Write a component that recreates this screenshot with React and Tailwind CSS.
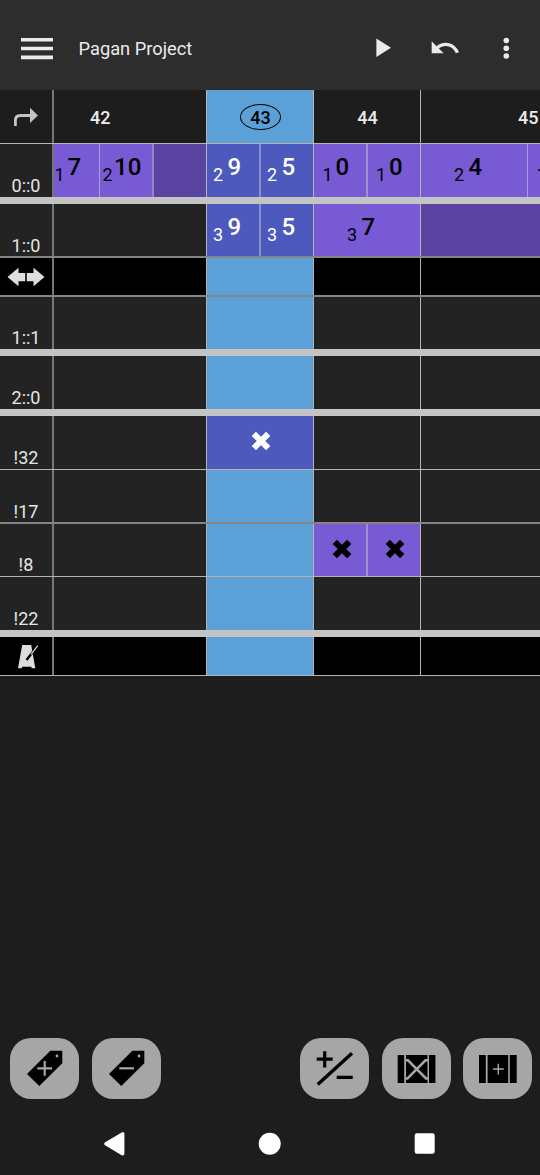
import React from "react";

const W_FIRST = "w-[153px] border-r border-[#b4b4b4]";
const W_BAR = "w-[107px] border-r border-[#b4b4b4]";
const W_LAST = "w-[119px]";

function Note({ octave, value, className = "", gap = "ml-[4.5px]" }) {
  return (
    <div className={`flex h-full shrink-0 overflow-hidden whitespace-nowrap ${className}`}>
      <span className="mt-[20px] ml-[0.5px] w-[10px] shrink-0 text-[18px] leading-[21px]">{octave}</span>
      <span className={`mt-[9px] text-[24px] leading-[28px] font-medium ${gap}`}>{value}</span>
    </div>
  );
}

function Hit({ className = "" }) {
  return (
    <div className={`flex h-full shrink-0 pt-[15px] ${className}`}>
      <svg width="20" height="20" viewBox="0 0 20 20" stroke="currentColor" strokeWidth="6" className="shrink-0">
        <path d="M2.8 2.8 17.2 17.2M17.2 2.8 2.8 17.2" />
      </svg>
    </div>
  );
}

function Row({ label, height, line = "", dark = false, cells = [] }) {
  const bg = dark ? "bg-black" : "bg-[#232323]";
  return (
    <div className={`flex shrink-0 overflow-hidden ${height} ${line} ${bg}`}>
      <div className="flex w-[54px] shrink-0 flex-col items-center justify-end border-r-2 border-[#777777] text-[18px] leading-[21px] text-[#e6e6e6]">
        {label}
      </div>
      <div className={`flex shrink-0 ${W_FIRST}`}>{cells[0]}</div>
      <div className={`flex shrink-0 bg-[#5ba1d7] ${W_BAR}`}>{cells[1]}</div>
      <div className={`flex shrink-0 ${W_BAR}`}>{cells[2]}</div>
      <div className={`flex shrink-0 overflow-hidden ${W_LAST}`}>{cells[3]}</div>
    </div>
  );
}

function Separator() {
  return <div className="h-[7px] shrink-0 bg-[#c4c4c4]" />;
}

function Action({ children, className = "" }) {
  return (
    <button className={`h-[61px] w-[69px] shrink-0 rounded-[21px] bg-[#a6a6a6] ${className}`}>
      <svg width="69" height="61" viewBox="0 0 69 61" fill="none">{children}</svg>
    </button>
  );
}

function Tag() {
  return (
    <>
      <path d="M17 36 40.3 12.7H52.3V25.3L29.3 48Z" fill="#000" />
      <circle cx="47" cy="18" r="1.4" fill="#a6a6a6" />
    </>
  );
}

const SOFT = "border-b-2 border-[#858585]";
const THIN = "border-b border-[#b4b4b4]";
const LABEL = "mb-[1px]";
const PURPLE = "bg-[#775ad4] text-black";
const INDIGO = "bg-[#4d59bc] text-white";

export default function App() {
  return (
    <div className="flex h-[1175px] w-[540px] flex-col overflow-hidden bg-[#1d1d1d] font-[Roboto,sans-serif]">
      <header className="flex h-[90px] shrink-0 items-start bg-[#2d2d2d] pl-[21px] text-[#ebebeb]">
        <svg width="32" height="22" viewBox="0 0 32 22" fill="currentColor" className="mt-[38px] shrink-0">
          <path d="M0 0h32v3.6H0zM0 8.7h32v3.6H0zM0 17.6h32v3.6H0z" />
        </svg>
        <h1 className="mt-[37px] ml-[25.5px] w-[279.5px] text-[18.3px] leading-[24px] whitespace-nowrap">Pagan Project</h1>
        <svg width="16" height="20" viewBox="0 0 16 20" fill="currentColor" className="mt-[38px] ml-[18px] shrink-0">
          <path d="M.4.6 15 9.8.4 19z" />
        </svg>
        <svg width="32" height="32" viewBox="0 0 24 24" fill="currentColor" className="mt-[32px] ml-[37px] shrink-0">
          <path d="M12.5 8c-2.65 0-5.05.99-6.9 2.6L2 7v9h9l-3.62-3.62c1.39-1.16 3.16-1.88 5.12-1.88 3.54 0 6.55 2.31 7.6 5.5l2.37-.78C21.08 11.03 17.15 8 12.5 8z" />
        </svg>
        <svg width="8" height="24" viewBox="0 0 8 24" fill="currentColor" className="mt-[36px] ml-[41px] shrink-0">
          <circle cx="4.3" cy="4.5" r="2.8" />
          <circle cx="4.3" cy="12.3" r="2.8" />
          <circle cx="4.3" cy="20" r="2.8" />
        </svg>
      </header>

      <div className={`flex h-[54px] shrink-0 text-[18px] leading-[21px] font-medium text-[#ebebeb] ${THIN}`}>
        <div className="w-[54px] shrink-0 border-r-2 border-[#777777] pt-[17px] pl-[13px]">
          <svg width="26" height="20" viewBox="0 0 26 20" fill="none">
            <path d="M2.4 19V13.5Q2.4 8.5 7.5 8.5H18" stroke="#c4c4c4" strokeWidth="2.8" />
            <path d="M17 .8 25 8.5 17 16z" fill="#c4c4c4" />
          </svg>
        </div>
        <div className={`shrink-0 pt-[17px] pl-[36px] ${W_FIRST}`}>42</div>
        <div className={`shrink-0 bg-[#5ba1d7] pt-[14px] pl-[33px] text-black ${W_BAR}`}>
          <div className="flex h-[26px] w-[41px] items-center justify-center rounded-[50%] border-[1.5px] border-black pt-[1px]">43</div>
        </div>
        <div className={`shrink-0 pt-[17px] pl-[1px] text-center ${W_BAR}`}>44</div>
        <div className={`shrink-0 overflow-hidden pt-[17px] pl-[97px] ${W_LAST}`}>45</div>
      </div>

      <Row
        height="h-[53px]"
        label={<span className={LABEL}>0::0</span>}
        cells={[
          <React.Fragment key="a">
            <Note octave="1" value="7" gap="ml-[3px]" className={`w-[46px] border-r border-[#a99cd6] ${PURPLE}`} />
            <Note octave="2" value="10" gap="ml-[1.5px]" className={`w-[52px] pl-[2px] ${PURPLE}`} />
            <div className="h-full flex-1 border-l-2 border-[#9285c4] bg-[#5944a2]" />
          </React.Fragment>,
          <React.Fragment key="b">
            <Note octave="2" value="9" className={`w-[54px] border-r-2 border-[#8a90c6] pl-[5.5px] ${INDIGO}`} />
            <Note octave="2" value="5" className={`w-[52px] pl-[5.5px] ${INDIGO}`} />
          </React.Fragment>,
          <React.Fragment key="c">
            <Note octave="1" value="0" gap="ml-[3px]" className={`w-[54px] border-r-2 border-[#9f8fcf] pl-[8px] ${PURPLE}`} />
            <Note octave="1" value="0" gap="ml-[3px]" className={`w-[52px] pl-[7.5px] ${PURPLE}`} />
          </React.Fragment>,
          <React.Fragment key="d">
            <Note octave="2" value="4" gap="ml-[4.5px]" className={`w-[107px] border-r border-[#a99cd6] pl-[32.5px] ${PURPLE}`} />
            <Note octave="1" value="" className={`w-[54px] pl-[8px] ${PURPLE}`} />
          </React.Fragment>,
        ]}
      />
      <Separator />
      <Row
        height="h-[54px]"
        line={SOFT}
        label={<span>1::0</span>}
        cells={[
          null,
          <React.Fragment key="b">
            <Note octave="3" value="9" className={`w-[54px] border-r-2 border-[#8a90c6] pl-[5.5px] ${INDIGO}`} />
            <Note octave="3" value="5" className={`w-[52px] pl-[5.5px] ${INDIGO}`} />
          </React.Fragment>,
          <Note key="c" octave="3" value="7" className={`w-full pl-[32.5px] ${PURPLE}`} />,
          <div key="d" className="size-full bg-[#5944a2]" />,
        ]}
      />
      <Row
        height="h-[39px]"
        line={SOFT}
        dark
        label={
          <svg width="38" height="20" viewBox="0 0 38 20" fill="#dedede" className="mb-[8px]">
            <path d="M.5 10 11.5.8V6H18.2V14.3H11.5V19.2ZM37.5 10 26.5.8V6H19.8V14.3H26.5V19.2Z" />
          </svg>
        }
      />
      <Row height="h-[52px]" label={<span className={LABEL}>1::1</span>} />
      <Separator />
      <Row height="h-[53px]" label={<span className={LABEL}>2::0</span>} />
      <Separator />
      <Row
        height="h-[54px]"
        line={THIN}
        label={<span className={LABEL}>!32</span>}
        cells={[null, <Hit key="b" className={`w-full pl-[44px] ${INDIGO}`} />]}
      />
      <Row height="h-[54px]" line={SOFT} label={<span>!17</span>} />
      <Row
        height="h-[53px]"
        line={THIN}
        label={<span className={LABEL}>!8</span>}
        cells={[
          null,
          null,
          <React.Fragment key="c">
            <Hit className={`w-[54px] border-r-2 border-[#9f8fcf] pl-[18px] ${PURPLE}`} />
            <Hit className={`w-[52px] pl-[17px] ${PURPLE}`} />
          </React.Fragment>,
        ]}
      />
      <Row height="h-[53px]" label={<span className={LABEL}>!22</span>} />
      <Separator />
      <Row
        height="h-[39px]"
        line={THIN}
        dark
        label={
          <svg width="22" height="26" viewBox="0 0 22 26" className="mb-[6px] ml-[3px]">
            <path d="M5.2 2H14.2L18.3 25.2H14.5V23.8H5V25.2H1Z" fill="#dedede" />
            <path d="M9.5 17 20.5 3" stroke="#000" strokeWidth="2.4" />
            <path d="M14 11.3 20.8 2.6" stroke="#dedede" strokeWidth="1.2" />
          </svg>
        }
      />

      <main className="flex-1" />

      <div className="flex h-[61px] shrink-0 justify-between pr-[8px] pl-[10px]">
        <div className="flex gap-[12.5px]">
          <Action>
            <Tag />
            <path d="M27.3 30.3H42M34.7 23V37.8" stroke="#a6a6a6" strokeWidth="2.2" />
          </Action>
          <Action>
            <Tag />
            <path d="M27.3 30.3H42" stroke="#a6a6a6" strokeWidth="2.2" />
          </Action>
        </div>
        <div className="flex gap-[12.5px]">
          <Action>
            <path d="M16.7 21.2H32.7M24.7 13.2V29.4M36.7 39.4H52.7" stroke="#000" strokeWidth="3.2" />
            <path d="M17.7 46.6 52 15.2" stroke="#000" strokeWidth="3.4" />
          </Action>
          <Action>
            <path d="M15.7 17H22.2V45H15.7ZM24 17H45.5V45H24ZM47 17H53.4V45H47Z" fill="#000" />
            <path d="M23 22.3H26L44 40.5H46M46 22.3H43.5L25.5 40.5H23" stroke="#a6a6a6" strokeWidth="2.5" />
          </Action>
          <Action>
            <path d="M16 17H22.8V45H16ZM24.6 17H45.2V45H24.6ZM46.8 17H53.7V45H46.8Z" fill="#000" />
            <path d="M30 31H40.8M35.3 25.7V36.5" stroke="#a6a6a6" strokeWidth="1.4" />
          </Action>
        </div>
      </div>

      <nav className="flex h-[76px] shrink-0 items-start pt-[32px] pl-[103px] text-white">
        <svg width="24" height="26" viewBox="0 0 24 26" fill="currentColor">
          <path d="M3 12.7 19.6 3V22.7Z" stroke="currentColor" strokeWidth="3.6" strokeLinejoin="round" />
        </svg>
        <svg width="24" height="26" viewBox="0 0 24 26" fill="currentColor" className="ml-[131px]">
          <circle cx="11.7" cy="12.7" r="11" />
        </svg>
        <svg width="22" height="26" viewBox="0 0 22 26" fill="currentColor" className="ml-[132px]">
          <rect x=".7" y="2.3" width="20" height="20.5" rx="2.2" />
        </svg>
      </nav>
    </div>
  );
}
